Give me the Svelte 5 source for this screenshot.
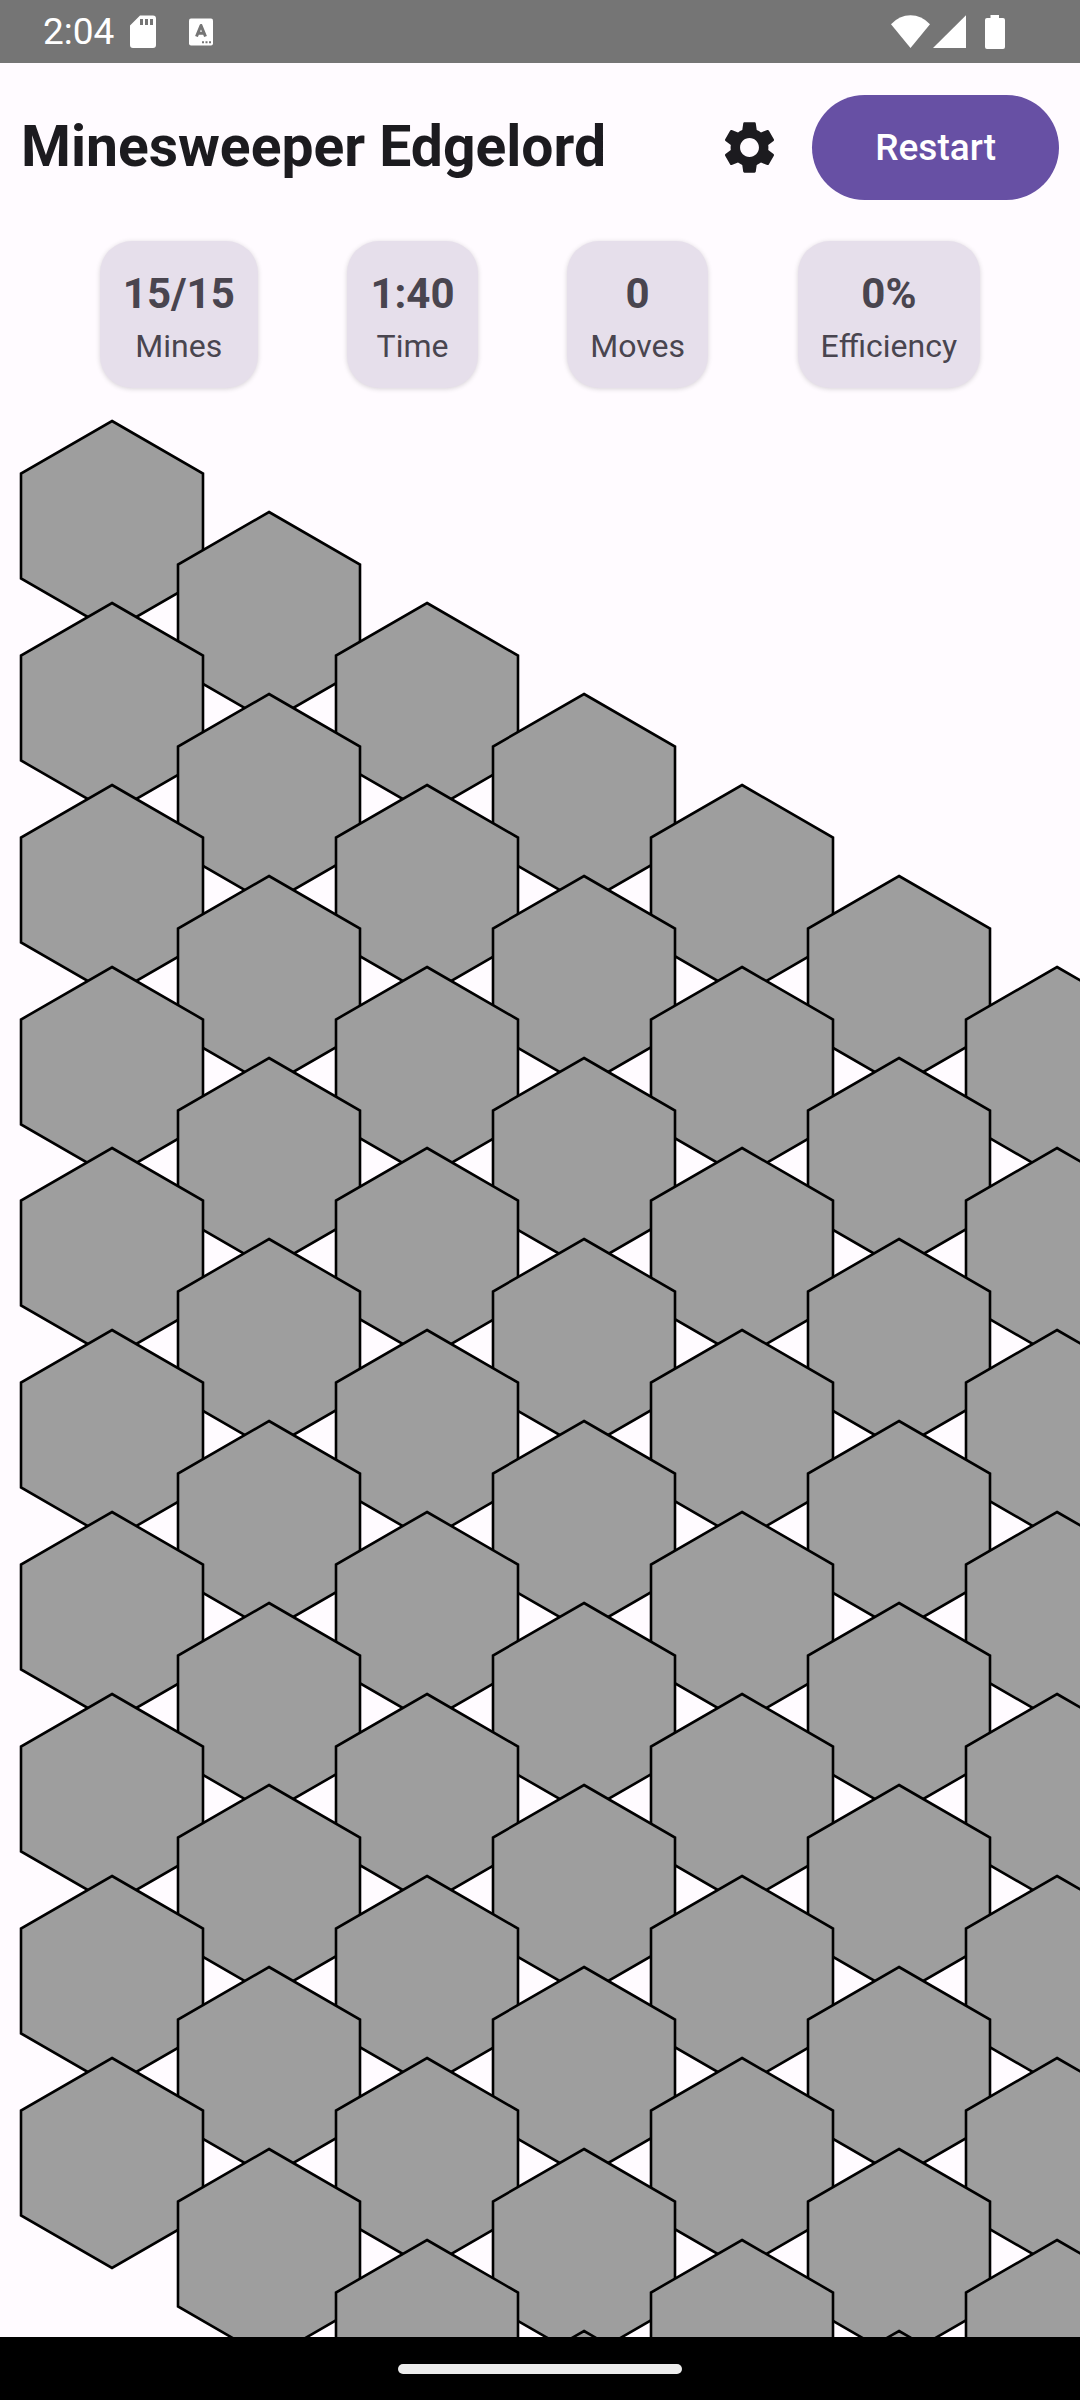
<script>
  const ROWS = 10;
  const COLS = 10;
  const RADIUS = 105;
  const HALF_WIDTH = (Math.sqrt(3) / 2) * RADIUS;

  const stats = [
    { value: '15/15', label: 'Mines' },
    { value: '1:40', label: 'Time' },
    { value: '0', label: 'Moves' },
    { value: '0%', label: 'Efficiency' }
  ];

  // Cells are listed row by row, so later rows overlap earlier ones.
  const cells = Array.from({ length: ROWS * COLS }, (_, i) => {
    const row = Math.floor(i / COLS);
    const col = i % COLS;
    return {
      row,
      col,
      left: Math.floor(col * RADIUS * 1.5),
      top: Math.round((2 * row + col) * HALF_WIDTH)
    };
  });
</script>

<div class="app">
  <div class="status">
    <div class="group">
      <span class="clock">2:04</span>
      <svg class="sd" width="26" height="34" viewBox="0 0 26 34" aria-hidden="true">
        <path fill="#fff" fill-rule="evenodd" d="M10 0.5H23Q26 0.5 26 3.5V30Q26 33 23 33H3Q0 33 0 30V10.5ZM10 4V10H13V4ZM15 4V10H18V4ZM20 4V10H23V4Z" />
      </svg>
      <svg class="lang" width="24" height="28" viewBox="0 0 24 28" aria-hidden="true">
        <rect y="0.5" width="24" height="27" rx="2" fill="#fff" />
        <path d="M7.500 18.500 12 7.500 16.500 18.500M9.200 15.200H14.800" fill="none" stroke="#757575" stroke-width="3" stroke-linejoin="round" />
        <path d="M13 23.300h2v2h-2zM16.500 23.300h2v2h-2zM20 23.300h2v2h-2z" fill="#757575" />
      </svg>
    </div>
    <div class="group">
      <svg width="39" height="34" viewBox="0 0 39 34" aria-hidden="true">
        <path fill="#fff" d="M0 9.200Q8.500 0.300 19.500 0.300T39 9.200L19.500 33Z" />
      </svg>
      <svg class="signal" width="33" height="34" viewBox="0 0 33 34" aria-hidden="true">
        <path fill="#fff" d="M33 0.300V33H0Z" />
      </svg>
      <svg class="battery" width="20" height="34" viewBox="0 0 20 34" aria-hidden="true">
        <path fill="#fff" d="M5.500 0H14V3H18Q20 3 20 5V32Q20 34 18 34H2Q0 34 0 32V5Q0 3 2 3H5.500Z" />
      </svg>
    </div>
  </div>

  <header>
    <h1>Minesweeper Edgelord</h1>
    <button class="settings" aria-label="Settings">
      <svg width="63" height="63" viewBox="0 0 24 24" aria-hidden="true">
        <path fill="#1c1b1f" d="M19.140 12.940c0.040-0.300 0.060-0.610 0.060-0.940c0-0.320-0.020-0.640-0.070-0.940l2.030-1.580c0.180-0.140 0.230-0.410 0.120-0.610l-1.920-3.320c-0.120-0.220-0.370-0.290-0.590-0.220l-2.390 0.960c-0.500-0.380-1.030-0.700-1.620-0.940L14.400 2.810c-0.040-0.240-0.240-0.410-0.480-0.410h-3.840c-0.240 0-0.430 0.170-0.470 0.410L9.250 5.350C8.660 5.590 8.120 5.920 7.630 6.290L5.240 5.330c-0.220-0.080-0.470 0-0.590 0.220L2.740 8.870C2.620 9.080 2.660 9.340 2.860 9.480l2.030 1.580C4.840 11.360 4.800 11.690 4.800 12s0.020 0.640 0.070 0.940l-2.030 1.580c-0.180 0.140-0.230 0.410-0.120 0.610l1.920 3.320c0.120 0.220 0.370 0.290 0.590 0.220l2.390-0.960c0.500 0.380 1.030 0.700 1.620 0.940l0.360 2.540c0.050 0.240 0.240 0.410 0.480 0.410h3.840c0.240 0 0.440-0.170 0.470-0.410l0.360-2.540c0.590-0.240 1.130-0.560 1.620-0.940l2.390 0.960c0.220 0.080 0.470 0 0.590-0.220l1.920-3.320c0.120-0.220 0.070-0.470-0.120-0.610L19.140 12.940zM12 15.600c-1.980 0-3.600-1.620-3.600-3.600s1.620-3.600 3.600-3.600s3.600 1.620 3.600 3.600S13.980 15.600 12 15.600z" />
      </svg>
    </button>
    <button class="restart">Restart</button>
  </header>

  <section class="stats">
    {#each stats as stat}
      <div class="card">
        <strong>{stat.value}</strong>
        <span>{stat.label}</span>
      </div>
    {/each}
  </section>

  <main>
    <div class="board">
      {#each cells as cell}
        <button
          class="cell"
          aria-label={`Row ${cell.row + 1}, column ${cell.col + 1}`}
          style="left: {cell.left}px; top: {cell.top}px"
        >
          <svg viewBox="0 0 182 210" aria-hidden="true">
            <polygon points="91,0 182,52.500 182,157.500 91,210 0,157.500 0,52.500" stroke-width="2.6" />
          </svg>
        </button>
      {/each}
    </div>
  </main>

  <footer><div class="handle"></div></footer>
</div>

<style>
  :global(body) {
    background: #fffbff;
  }

  .app {
    display: flex;
    flex-direction: column;
    height: 100vh;
    overflow: hidden;
    font-family: Roboto, sans-serif;
    color: #1c1b1f;
    background: #fffbff;
  }

  button {
    margin: 0;
    padding: 0;
    border: 0;
    background: none;
    font-family: inherit;
    cursor: pointer;
  }

  svg {
    display: block;
    flex: none;
  }

  .status {
    display: flex;
    flex: none;
    align-items: center;
    justify-content: space-between;
    height: 63px;
    padding: 0 75px 0 43px;
    box-sizing: border-box;
    background: #757575;
  }

  .group {
    display: flex;
    align-items: center;
  }

  .clock {
    font-size: 37px;
    line-height: 42px;
    color: #fff;
  }

  .sd {
    margin-left: 16px;
  }

  .lang {
    margin-left: 33px;
  }

  .signal {
    margin-left: 3px;
  }

  .battery {
    margin-left: 19px;
  }

  header {
    display: flex;
    flex: none;
    align-items: center;
    padding: 21px 21px 0;
  }

  h1 {
    flex: 1;
    margin: 0;
    font-size: 57px;
    line-height: 74px;
    font-weight: 700;
    white-space: nowrap;
  }

  .settings {
    display: flex;
    align-items: center;
    justify-content: center;
    width: 126px;
    height: 126px;
  }

  .restart {
    height: 105px;
    padding: 0 63px;
    border-radius: 53px;
    background: #6750a4;
    color: #fff;
    font-size: 37px;
    font-weight: 500;
  }

  .stats {
    display: flex;
    flex: none;
    justify-content: space-around;
    padding: 31px 55px 0;
  }

  .card {
    display: flex;
    flex-direction: column;
    align-items: center;
    padding: 21px 23px;
    border-radius: 32px;
    background: #e6dfeb;
    color: #49454f;
    box-shadow: 0 1px 5px rgba(0, 0, 0, 0.16);
  }

  .card strong {
    font-size: 42px;
    line-height: 63px;
  }

  .card span {
    font-size: 32px;
    line-height: 42px;
  }

  main {
    flex: 1;
    min-height: 0;
    padding: 33px 0 0 21px;
    overflow: hidden;
  }

  .board {
    position: relative;
  }

  .cell {
    position: absolute;
    width: 182px;
    height: 210px;
    pointer-events: none;
  }

  .cell svg {
    width: 100%;
    height: 100%;
    overflow: visible;
  }

  .cell polygon {
    fill: #9e9e9e;
    stroke: #000;
    pointer-events: auto;
  }

  footer {
    display: flex;
    flex: none;
    align-items: center;
    justify-content: center;
    height: 63px;
    background: #000;
  }

  .handle {
    width: 284px;
    height: 10px;
    border-radius: 5px;
    background: #ececec;
  }
</style>
